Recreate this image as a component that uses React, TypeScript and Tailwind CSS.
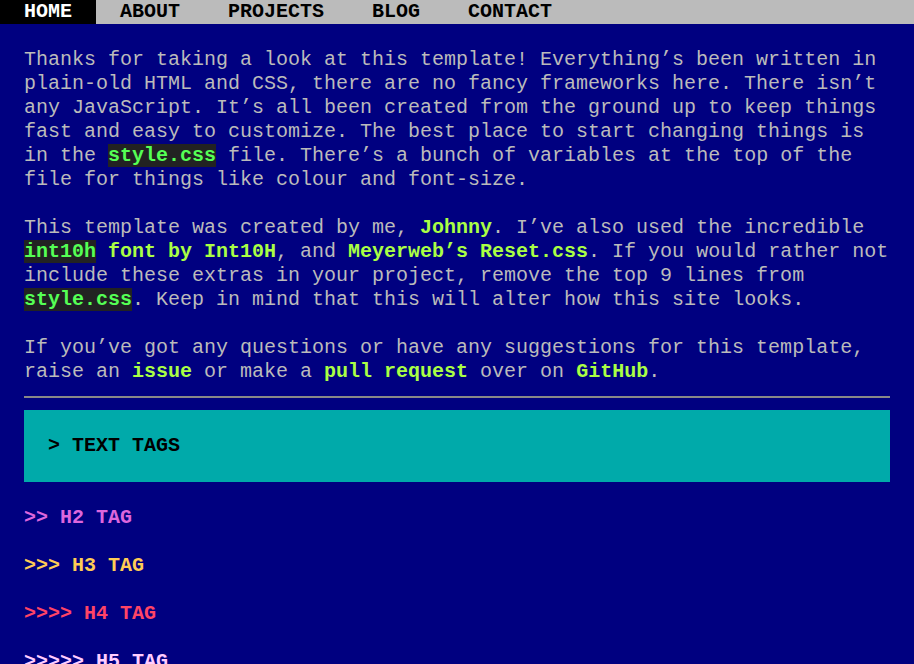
import React from "react";

const font = { fontFamily: '"Liberation Mono", "DejaVu Sans Mono", monospace' };

function Code({ children }: { children: React.ReactNode }) {
  return <span className="bg-[#222222] text-[#55ff55] font-bold">{children}</span>;
}

function A({ children }: { children: React.ReactNode }) {
  return <a className="text-[#aaff44] font-bold">{children}</a>;
}

export default function App() {
  const nav = ["HOME", "ABOUT", "PROJECTS", "BLOG", "CONTACT"];
  return (
    <div
      className="min-h-screen bg-[#000080] text-[#bbbbbb] text-[20px] leading-6"
      style={font}
    >
      <nav className="flex h-6 bg-[#bbbbbb]">
        {nav.map((n, i) => (
          <a
            key={n}
            className={
              "px-6 h-6 leading-6 font-bold " +
              (i === 0 ? "bg-black text-white" : "text-black")
            }
          >
            {n}
          </a>
        ))}
      </nav>
      <main className="px-6 pt-6">
        <p>
          Thanks for taking a look at this template! Everything’s been written in
          plain-old HTML and CSS, there are no fancy frameworks here. There isn’t
          any JavaScript. It’s all been created from the ground up to keep things
          fast and easy to customize. The best place to start changing things is
          in the <Code>style.css</Code> file. There’s a bunch of variables at the
          top of the file for things like colour and font-size.
        </p>
        <p className="mt-6">
          This template was created by me, <A>Johnny</A>. I’ve also used the
          incredible{" "}
          <A>
            <Code>int10h</Code> font by Int10H
          </A>
          , and <A>Meyerweb’s Reset.css</A>. If you would rather not include these
          extras in your project, remove the top 9 lines from <Code>style.css</Code>.
          Keep in mind that this will alter how this site looks.
        </p>
        <p className="mt-6">
          If you’ve got any questions or have any suggestions for this template,
          raise an <A>issue</A> or make a <A>pull request</A> over on{" "}
          <A>GitHub</A>.
        </p>
        <hr className="my-3 border-0 h-[2px] bg-[#888888]" />
        <h1 className="bg-[#00aaaa] text-black font-bold p-6">&gt; TEXT TAGS</h1>
        <h2 className="mt-6 font-bold text-[#dd66dd]">&gt;&gt; H2 TAG</h2>
        <h3 className="mt-6 font-bold text-[#ffcc55]">&gt;&gt;&gt; H3 TAG</h3>
        <h4 className="mt-6 font-bold text-[#ff4466]">&gt;&gt;&gt;&gt; H4 TAG</h4>
        <h5 className="mt-6 font-bold text-[#ffccff]">&gt;&gt;&gt;&gt;&gt; H5 TAG</h5>
        <h6 className="mt-6 font-bold text-[#bbbbbb]">&gt;&gt;&gt;&gt;&gt;&gt; H6 TAG</h6>
      </main>
    </div>
  );
}
